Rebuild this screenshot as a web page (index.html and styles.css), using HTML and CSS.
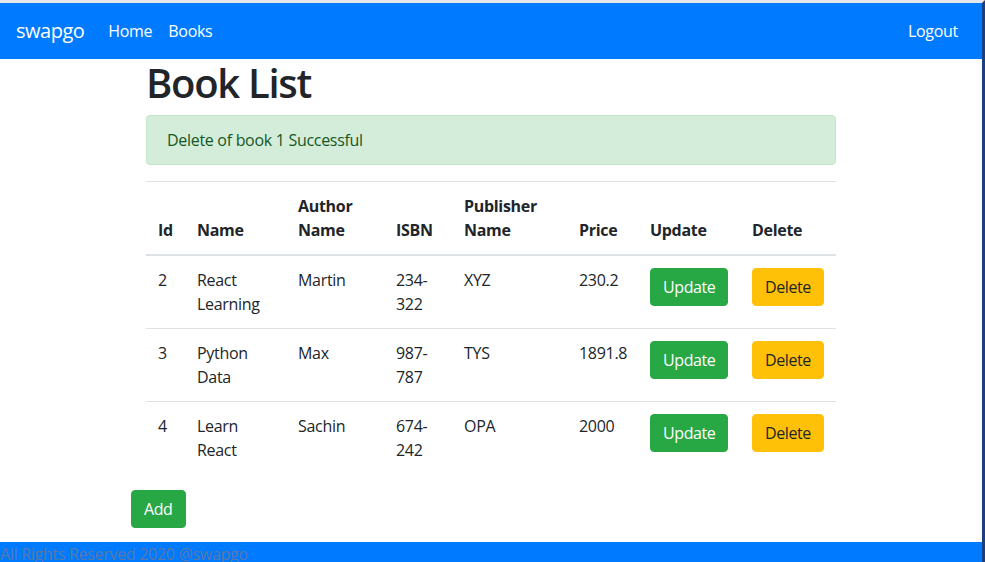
FILE: index.html
```html
<!DOCTYPE html>
<html lang="en">
<head>
<meta charset="utf-8">
<title>swapgo</title>
<link rel="stylesheet" href="styles.css">
</head>
<body>
<nav class="navbar">
  <a class="brand" href="#">swapgo</a>
  <ul class="nav">
    <li><a class="nav-link" href="#">Home</a></li>
    <li><a class="nav-link" href="#">Books</a></li>
  </ul>
  <ul class="nav nav-right">
    <li><a class="nav-link" href="#">Logout</a></li>
  </ul>
</nav>
<main class="container">
  <h1 class="title">Book List</h1>
  <div class="alert">Delete of book 1 Successful</div>
  <table class="table">
    <colgroup>
      <col class="c-id"><col class="c-name"><col class="c-author"><col class="c-isbn"><col class="c-pub"><col class="c-price"><col class="c-upd"><col class="c-del">
    </colgroup>
    <thead>
      <tr><th>Id</th><th>Name</th><th>Author Name</th><th>ISBN</th><th>Publisher Name</th><th>Price</th><th>Update</th><th>Delete</th></tr>
    </thead>
    <tbody>
      <tr><td>2</td><td>React Learning</td><td>Martin</td><td>234-322</td><td>XYZ</td><td>230.2</td><td><button class="btn btn-success">Update</button></td><td><button class="btn btn-warning">Delete</button></td></tr>
      <tr><td>3</td><td>Python Data</td><td>Max</td><td>987-787</td><td>TYS</td><td>1891.8</td><td><button class="btn btn-success">Update</button></td><td><button class="btn btn-warning">Delete</button></td></tr>
      <tr><td>4</td><td>Learn React</td><td>Sachin</td><td>674-242</td><td>OPA</td><td>2000</td><td><button class="btn btn-success">Update</button></td><td><button class="btn btn-warning">Delete</button></td></tr>
    </tbody>
  </table>
</main>
<div class="actions">
  <button class="btn btn-success">Add</button>
</div>
<footer class="footer">All Rights Reserved 2020 @swapgo</footer>
</body>
</html>
```
FILE: styles.css
```css
html, body {
  margin: 0;
  padding: 0;
}
body {
  box-sizing: border-box;
  min-height: 100vh;
  border-top: 3px solid #e6e8ea;
  border-right: 3px solid #1c3f80;
  font-family: "Open Sans", "Noto Sans", sans-serif;
  font-size: 16px;
  line-height: 24px;
  color: #212529;
  background: #fff;
}
.navbar {
  display: flex;
  align-items: center;
  background: #007bff;
  padding: 8px 16px;
}
.brand {
  color: #fff;
  text-decoration: none;
  font-size: 20px;
  line-height: 30px;
  padding: 5px 0;
  margin-right: 16px;
  letter-spacing: -0.5px;
}
.nav {
  display: flex;
  list-style: none;
  margin: 0;
  padding: 0;
}
.nav-right {
  margin-left: auto;
}
.nav-link {
  display: block;
  padding: 8px;
  color: #fff;
  text-decoration: none;
  letter-spacing: -0.3px;
}
.container {
  max-width: 720px;
  margin: 0 auto;
  padding: 0 15px;
  box-sizing: border-box;
}
.title {
  margin: 0 0 8px;
  font-size: 40px;
  line-height: 48px;
  font-weight: 600;
  letter-spacing: -1.3px;
}
.alert {
  padding: 12px 20px;
  margin-bottom: 16px;
  border: 1px solid #c3e6cb;
  border-radius: 4px;
  background: #d4edda;
  color: #155724;
  letter-spacing: -0.3px;
}
.table {
  width: 100%;
  border-collapse: collapse;
  table-layout: fixed;
  margin-bottom: 16px;
  letter-spacing: -0.3px;
}
.c-id { width: 39px; }
.c-name { width: 101px; }
.c-author { width: 98px; }
.c-isbn { width: 68px; }
.c-pub { width: 115px; }
.c-price { width: 71px; }
.c-upd { width: 102px; }
.c-del { width: 96px; }
.table th, .table td {
  padding: 12px;
  text-align: left;
  vertical-align: top;
  border-top: 1px solid #dee2e6;
}
.table th {
  font-weight: 700;
}
.table thead th {
  vertical-align: bottom;
  border-bottom: 2px solid #dee2e6;
}
.btn {
  display: inline-block;
  font-family: inherit;
  font-size: 16px;
  line-height: 24px;
  padding: 6px 12px;
  border: 1px solid transparent;
  border-radius: 4px;
  cursor: pointer;
  letter-spacing: -0.4px;
}
.btn-success {
  background: #28a745;
  border-color: #28a745;
  color: #fff;
}
.btn-warning {
  background: #ffc107;
  border-color: #ffc107;
  color: #212529;
}
.actions {
  max-width: 720px;
  margin: 0 auto 14px;
}
.footer {
  background: #007bff;
  color: #5a77a8;
  line-height: 24px;
  letter-spacing: -0.3px;
}
```
